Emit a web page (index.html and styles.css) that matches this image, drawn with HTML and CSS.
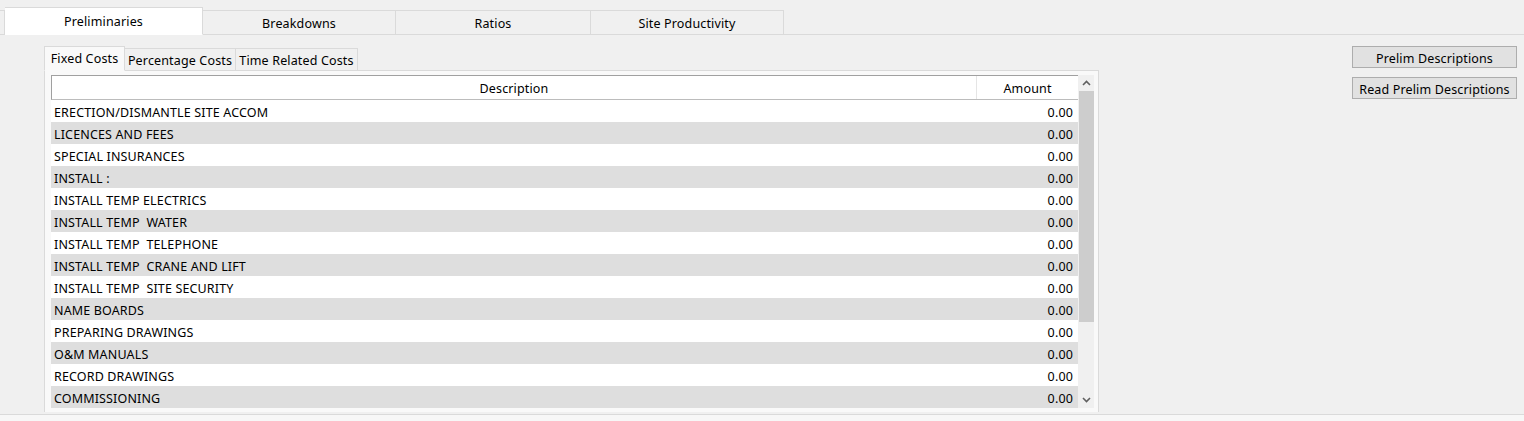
FILE: index.html
```html
<!DOCTYPE html>
<html lang="en">
<head>
<meta charset="utf-8">
<title>Preliminaries</title>
<link rel="stylesheet" href="styles.css">
</head>
<body>
<div class="tabstrip">
  <div class="tab stub"></div>
  <div class="tab selected w198">Preliminaries</div>
  <div class="tab w193">Breakdowns</div>
  <div class="tab w195">Ratios</div>
  <div class="tab w193">Site Productivity</div>
</div>
<div class="main">
  <div class="inner">
    <div class="inner-tabs">
      <div class="itab selected w81">Fixed Costs</div>
      <div class="itab w111">Percentage Costs</div>
      <div class="itab w122">Time Related Costs</div>
    </div>
    <div class="panel">
      <div class="grid">
        <div class="table">
          <div class="header">
            <div class="hcell desc">Description</div>
            <div class="hcell amt">Amount</div>
          </div>
          <div class="row"><div class="cell desc">ERECTION/DISMANTLE SITE ACCOM</div><div class="cell amt">0.00</div></div>
          <div class="row alt"><div class="cell desc">LICENCES AND FEES</div><div class="cell amt">0.00</div></div>
          <div class="row"><div class="cell desc">SPECIAL INSURANCES</div><div class="cell amt">0.00</div></div>
          <div class="row alt"><div class="cell desc">INSTALL :</div><div class="cell amt">0.00</div></div>
          <div class="row"><div class="cell desc">INSTALL TEMP ELECTRICS</div><div class="cell amt">0.00</div></div>
          <div class="row alt"><div class="cell desc">INSTALL TEMP&nbsp; WATER</div><div class="cell amt">0.00</div></div>
          <div class="row"><div class="cell desc">INSTALL TEMP&nbsp; TELEPHONE</div><div class="cell amt">0.00</div></div>
          <div class="row alt"><div class="cell desc">INSTALL TEMP&nbsp; CRANE AND LIFT</div><div class="cell amt">0.00</div></div>
          <div class="row"><div class="cell desc">INSTALL TEMP&nbsp; SITE SECURITY</div><div class="cell amt">0.00</div></div>
          <div class="row alt"><div class="cell desc">NAME BOARDS</div><div class="cell amt">0.00</div></div>
          <div class="row"><div class="cell desc">PREPARING DRAWINGS</div><div class="cell amt">0.00</div></div>
          <div class="row alt"><div class="cell desc">O&amp;M MANUALS</div><div class="cell amt">0.00</div></div>
          <div class="row"><div class="cell desc">RECORD DRAWINGS</div><div class="cell amt">0.00</div></div>
          <div class="row alt"><div class="cell desc">COMMISSIONING</div><div class="cell amt">0.00</div></div>
        </div>
        <div class="scrollbar">
          <div class="arrow"><svg width="9" height="6" viewBox="0 0 9 6"><path d="M1 5 L4.5 1.5 L8 5" fill="none" stroke="#606060" stroke-width="1.6"/></svg></div>
          <div class="track"><div class="thumb"></div></div>
          <div class="arrow"><svg width="9" height="6" viewBox="0 0 9 6"><path d="M1 1 L4.5 4.5 L8 1" fill="none" stroke="#606060" stroke-width="1.6"/></svg></div>
        </div>
      </div>
    </div>
  </div>
  <div class="buttons">
    <button class="btn">Prelim Descriptions</button>
    <button class="btn">Read Prelim Descriptions</button>
  </div>
</div>
<div class="footer"></div>
</body>
</html>
```

FILE: styles.css
```css
* { box-sizing: border-box; }
html, body { margin: 0; padding: 0; }
body {
  width: 1524px;
  height: 421px;
  overflow: hidden;
  background: #f0f0f0;
  font-family: "Noto Sans", "Open Sans", sans-serif;
  font-size: 12.5px;
  letter-spacing: 0.15px;
  color: #000;
}
.tabstrip {
  display: flex;
  align-items: flex-end;
  height: 35px;
  border-bottom: 1px solid #dadada;
}
.tab {
  height: 25px;
  margin-bottom: -1px;
  border: 1px solid #dadada;
  border-left: none;
  background: #f0f0f0;
  display: flex;
  align-items: center;
  justify-content: center;
  padding-top: 2px;
}
.tab.stub { width: 5px; }
.tab.selected {
  height: 28px;
  background: #fff;
  border-bottom-color: #fff;
  padding-top: 1px;
  padding-bottom: 0;
}
.w198 { width: 198px; }
.w193 { width: 193px; }
.w195 { width: 195px; }
.w81 { width: 81px; }
.w111 { width: 111px; }
.w122 { width: 122px; }

.main {
  display: flex;
  height: 379px;
  padding: 11px 7px 0 44px;
}
.inner { width: 1055px; display: flex; flex-direction: column; }
.inner-tabs {
  display: flex;
  align-items: flex-end;
  height: 24px;
}
.itab {
  height: 23px;
  margin-bottom: -1px;
  border: 1px solid #dadada;
  border-left: none;
  background: #f0f0f0;
  display: flex;
  align-items: center;
  justify-content: center;
  padding-top: 2px;
  position: relative;
}
.itab.selected {
  height: 25px;
  border-left: 1px solid #dadada;
  background: #f9f9f9;
  border-bottom-color: #f9f9f9;
  padding-top: 0;
  padding-bottom: 0;
  z-index: 1;
}
.panel {
  height: 342px;
  border: 1px solid #dadada;
  border-bottom: none;
  background: #f9f9f9;
  padding: 4px 4px 3px 6px;
}
.grid {
  display: flex;
  height: 333px;
}
.table {
  width: 1027px;
  background: #fff;
}
.header {
  display: flex;
  height: 25px;
  border: 1px solid #a0a0a0;
  border-bottom-color: #bcbcbc;
  border-right: none;
  background: #fff;
}
.hcell {
  display: flex;
  align-items: center;
  justify-content: center;
  padding-top: 2px;
}
.hcell.desc { width: 925px; border-right: 1px solid #e5e5e5; }
.hcell.amt { flex: 1; }
.row {
  display: flex;
  height: 22px;
  align-items: center;
  background: #fff;
  padding-top: 2px;
}
.row.alt { background: #dedede; }
.cell.desc { flex: 1; padding-left: 3px; white-space: pre; }
.cell.amt { width: 100px; text-align: right; padding-right: 5px; }
.scrollbar {
  width: 16px;
  display: flex;
  flex-direction: column;
  background: #f0f0f0;
}
.arrow {
  height: 16px;
  display: flex;
  align-items: center;
  justify-content: center;
}
.track { flex: 1; padding-left: 1px; }
.thumb { height: 231px; background: #cdcdcd; }

.buttons {
  margin-left: auto;
  width: 165px;
  display: flex;
  flex-direction: column;
  gap: 9px;
}
.btn {
  height: 22px;
  border: 1px solid #adadad;
  background: #e1e1e1;
  font-family: inherit;
  font-size: 12.5px;
  letter-spacing: 0.15px;
  color: #000;
  padding: 2px 0 0;
}
.footer {
  height: 7px;
  border-top: 1px solid #dadada;
  background: #f7f7f7;
}
```
